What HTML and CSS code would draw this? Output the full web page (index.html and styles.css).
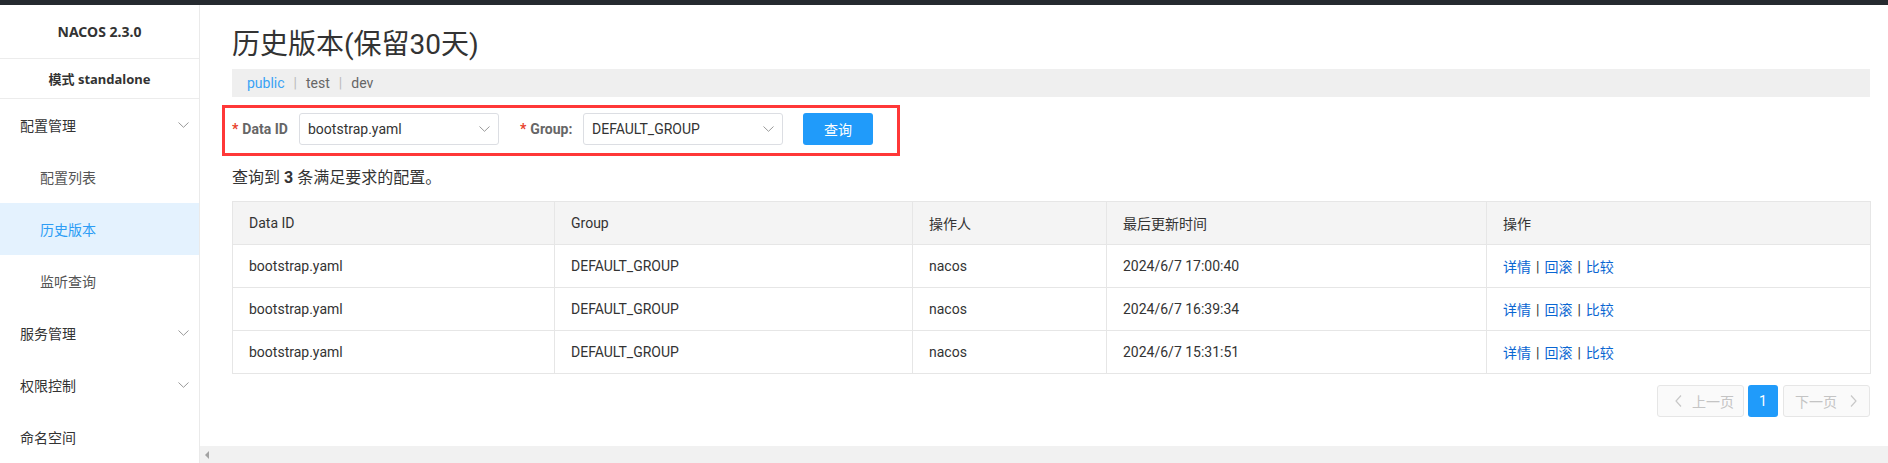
FILE: index.html
```html
<!DOCTYPE html>
<html lang="zh-CN">
<head>
<meta charset="utf-8">
<title>历史版本</title>
<link rel="stylesheet" href="styles.css">
</head>
<body>
<div class="topbar"></div>
<div class="layout">
  <aside class="sidebar">
    <div class="brand">NACOS 2.3.0</div>
    <div class="mode">模式 standalone</div>
    <nav class="menu">
      <div class="menu-item">配置管理<svg class="chev" width="11" height="6" viewBox="0 0 11 6"><polyline points="0.5,0.5 5.5,5.3 10.5,0.5" fill="none" stroke="#999" stroke-width="1"/></svg></div>
      <div class="menu-item sub">配置列表</div>
      <div class="menu-item sub active">历史版本</div>
      <div class="menu-item sub">监听查询</div>
      <div class="menu-item">服务管理<svg class="chev" width="11" height="6" viewBox="0 0 11 6"><polyline points="0.5,0.5 5.5,5.3 10.5,0.5" fill="none" stroke="#999" stroke-width="1"/></svg></div>
      <div class="menu-item">权限控制<svg class="chev" width="11" height="6" viewBox="0 0 11 6"><polyline points="0.5,0.5 5.5,5.3 10.5,0.5" fill="none" stroke="#999" stroke-width="1"/></svg></div>
      <div class="menu-item">命名空间</div>
    </nav>
  </aside>
  <main class="main">
    <div class="content">
      <h1 class="title">历史版本(保留30天)</h1>
      <div class="ns-bar">
        <span class="ns current">public</span><span class="ns-sep">|</span><span class="ns">test</span><span class="ns-sep">|</span><span class="ns">dev</span>
      </div>
      <form class="search">
        <div class="field">
          <label class="label label-id"><span class="req">*</span>Data ID</label>
          <div class="select"><span>bootstrap.yaml</span><svg width="11" height="6" viewBox="0 0 11 6"><polyline points="0.5,0.5 5.5,5.3 10.5,0.5" fill="none" stroke="#999" stroke-width="1"/></svg></div>
        </div>
        <div class="field">
          <label class="label label-group"><span class="req">*</span>Group:</label>
          <div class="select"><span>DEFAULT_GROUP</span><svg width="11" height="6" viewBox="0 0 11 6"><polyline points="0.5,0.5 5.5,5.3 10.5,0.5" fill="none" stroke="#999" stroke-width="1"/></svg></div>
        </div>
        <button type="button" class="btn-primary">查询</button>
      </form>
      <div class="summary">查询到 <b>3</b> 条满足要求的配置。</div>
      <table class="grid">
        <colgroup>
          <col class="c1"><col class="c2"><col class="c3"><col class="c4"><col class="c5">
        </colgroup>
        <thead>
          <tr><th>Data ID</th><th>Group</th><th>操作人</th><th>最后更新时间</th><th>操作</th></tr>
        </thead>
        <tbody>
          <tr><td>bootstrap.yaml</td><td>DEFAULT_GROUP</td><td>nacos</td><td>2024/6/7 17:00:40</td><td class="ops"><a class="link">详情</a><span class="pipe">|</span><a class="link">回滚</a><span class="pipe">|</span><a class="link">比较</a></td></tr>
          <tr><td>bootstrap.yaml</td><td>DEFAULT_GROUP</td><td>nacos</td><td>2024/6/7 16:39:34</td><td class="ops"><a class="link">详情</a><span class="pipe">|</span><a class="link">回滚</a><span class="pipe">|</span><a class="link">比较</a></td></tr>
          <tr><td>bootstrap.yaml</td><td>DEFAULT_GROUP</td><td>nacos</td><td>2024/6/7 15:31:51</td><td class="ops"><a class="link">详情</a><span class="pipe">|</span><a class="link">回滚</a><span class="pipe">|</span><a class="link">比较</a></td></tr>
        </tbody>
      </table>
      <div class="pagination">
        <button type="button" class="pg-btn prev" disabled><svg width="7" height="12" viewBox="0 0 7 12"><polyline points="6,0.5 1,6 6,11.5" fill="none" stroke="#c8c8c8" stroke-width="1.2"/></svg><span>上一页</span></button>
        <button type="button" class="pg-num">1</button>
        <button type="button" class="pg-btn next" disabled><span>下一页</span><svg width="7" height="12" viewBox="0 0 7 12"><polyline points="1,0.5 6,6 1,11.5" fill="none" stroke="#c8c8c8" stroke-width="1.2"/></svg></button>
      </div>
    </div>
    <div class="hscroll"><span class="arrow"></span></div>
  </main>
</div>
</body>
</html>
```
FILE: styles.css
```css
* { box-sizing: border-box; }
html, body { margin: 0; padding: 0; }
body {
  width: 1888px;
  height: 463px;
  overflow: hidden;
  background: #fff;
  color: #333;
  font-family: Roboto, "Noto Sans CJK SC", sans-serif;
  font-size: 14px;
}
.topbar { height: 5px; background: #252a2f; }
.layout { display: flex; height: 458px; }

/* sidebar */
.sidebar {
  width: 200px;
  flex: none;
  border-right: 1px solid #eaeaea;
  background: #fff;
  font-family: "Noto Sans", "Noto Sans CJK SC", sans-serif;
}
.brand {
  height: 54px;
  display: flex;
  align-items: center;
  justify-content: center;
  border-bottom: 1px solid #ececec;
  font-weight: 700;
  font-size: 14px;
  color: #333;
}
.mode {
  height: 40px;
  display: flex;
  align-items: center;
  justify-content: center;
  border-bottom: 1px solid #ececec;
  font-weight: 700;
  font-size: 13px;
  color: #333;
}
.menu { display: flex; flex-direction: column; }
.menu-item {
  height: 52px;
  display: flex;
  align-items: center;
  justify-content: space-between;
  padding: 0 10px 0 20px;
  font-family: "Noto Sans CJK SC", sans-serif;
  font-size: 14px;
  color: #333;
}
.menu-item.sub { padding-left: 40px; color: #555; }
.menu-item.active { background: #e4f2fe; color: #2d9df5; }
.chev { flex: none; }

/* main */
.main { flex: 1; min-width: 0; display: flex; flex-direction: column; }
.content { flex: 1; padding: 22px 18px 0 32px; }
.title {
  margin: 0;
  font-size: 28px;
  line-height: 36px;
  font-weight: 400;
  color: #333;
}
.ns-bar {
  margin-top: 6px;
  height: 28px;
  background: #efefef;
  display: flex;
  align-items: center;
  padding-left: 15px;
  font-size: 14px;
  color: #666;
}
.ns.current { color: #3aa3f5; }
.ns-sep { color: #bbb; padding: 0 9px; }

.search {
  margin: 8px 0 0 -10px;
  width: fit-content;
  border: 3px solid #ff3838;
  padding: 5px 24px 8px 7px;
  display: flex;
  align-items: center;
}
.field { display: flex; align-items: center; margin-right: 21px; }
.field + .btn-primary { margin-left: -1px; }
.label { font-weight: 700; color: #666; white-space: nowrap; }
.label-id { width: 67px; }
.label-group { width: 63px; }
.req { color: #e8412c; margin-right: 4px; }
.select {
  width: 200px;
  height: 32px;
  border: 1px solid #dcdee3;
  border-radius: 3px;
  padding: 0 8px;
  display: flex;
  align-items: center;
  justify-content: space-between;
  color: #333;
  background: #fff;
}
.btn-primary {
  width: 70px;
  height: 32px;
  border: none;
  border-radius: 3px;
  background: #209bfa;
  color: #fff;
  font-family: "Noto Sans CJK SC", sans-serif;
  font-size: 14px;
  padding: 0;
}
.summary {
  margin-top: 10px;
  font-size: 16px;
  line-height: 24px;
  color: #333;
}
.summary b { font-weight: 700; }

.grid {
  margin-top: 11px;
  width: 100%;
  border-collapse: collapse;
  table-layout: fixed;
}
.c1 { width: 322px; }
.c2 { width: 358px; }
.c3 { width: 194px; }
.c4 { width: 380px; }
.c5 { width: 384px; }
.grid th, .grid td {
  border: 1px solid #e6e6e6;
  height: 43px;
  padding: 0 16px;
  text-align: left;
  font-weight: 400;
  color: #333;
  white-space: nowrap;
}
.grid th { background: #f4f4f4; }
.link { color: #0a66d2; cursor: pointer; }
.pipe { color: #333; margin: 0 5px; }

.pagination {
  margin-top: 11px;
  display: flex;
  justify-content: flex-end;
  gap: 4px;
}
.pg-btn {
  width: 87px;
  height: 32px;
  border: 1px solid #e6e6e6;
  border-radius: 3px;
  background: #fafafa;
  color: #c4c4c4;
  display: flex;
  align-items: center;
  font-family: "Noto Sans CJK SC", sans-serif;
  font-size: 14px;
  padding: 0;
}
.pg-btn.prev { padding-left: 17px; gap: 10px; }
.pg-btn.next { padding-left: 11px; gap: 13px; }
.pg-num {
  width: 30px;
  height: 32px;
  border: none;
  border-radius: 3px;
  background: #209bfa;
  color: #fff;
  font-family: Roboto, sans-serif;
  font-size: 14px;
  padding: 0;
  margin-right: 1px;
}

.hscroll {
  height: 17px;
  flex: none;
  background: #f1f1f1;
  display: flex;
  align-items: center;
  padding-left: 5px;
}
.arrow {
  width: 0;
  height: 0;
  border-top: 4px solid transparent;
  border-bottom: 4px solid transparent;
  border-right: 4px solid #a3a3a3;
}
```
